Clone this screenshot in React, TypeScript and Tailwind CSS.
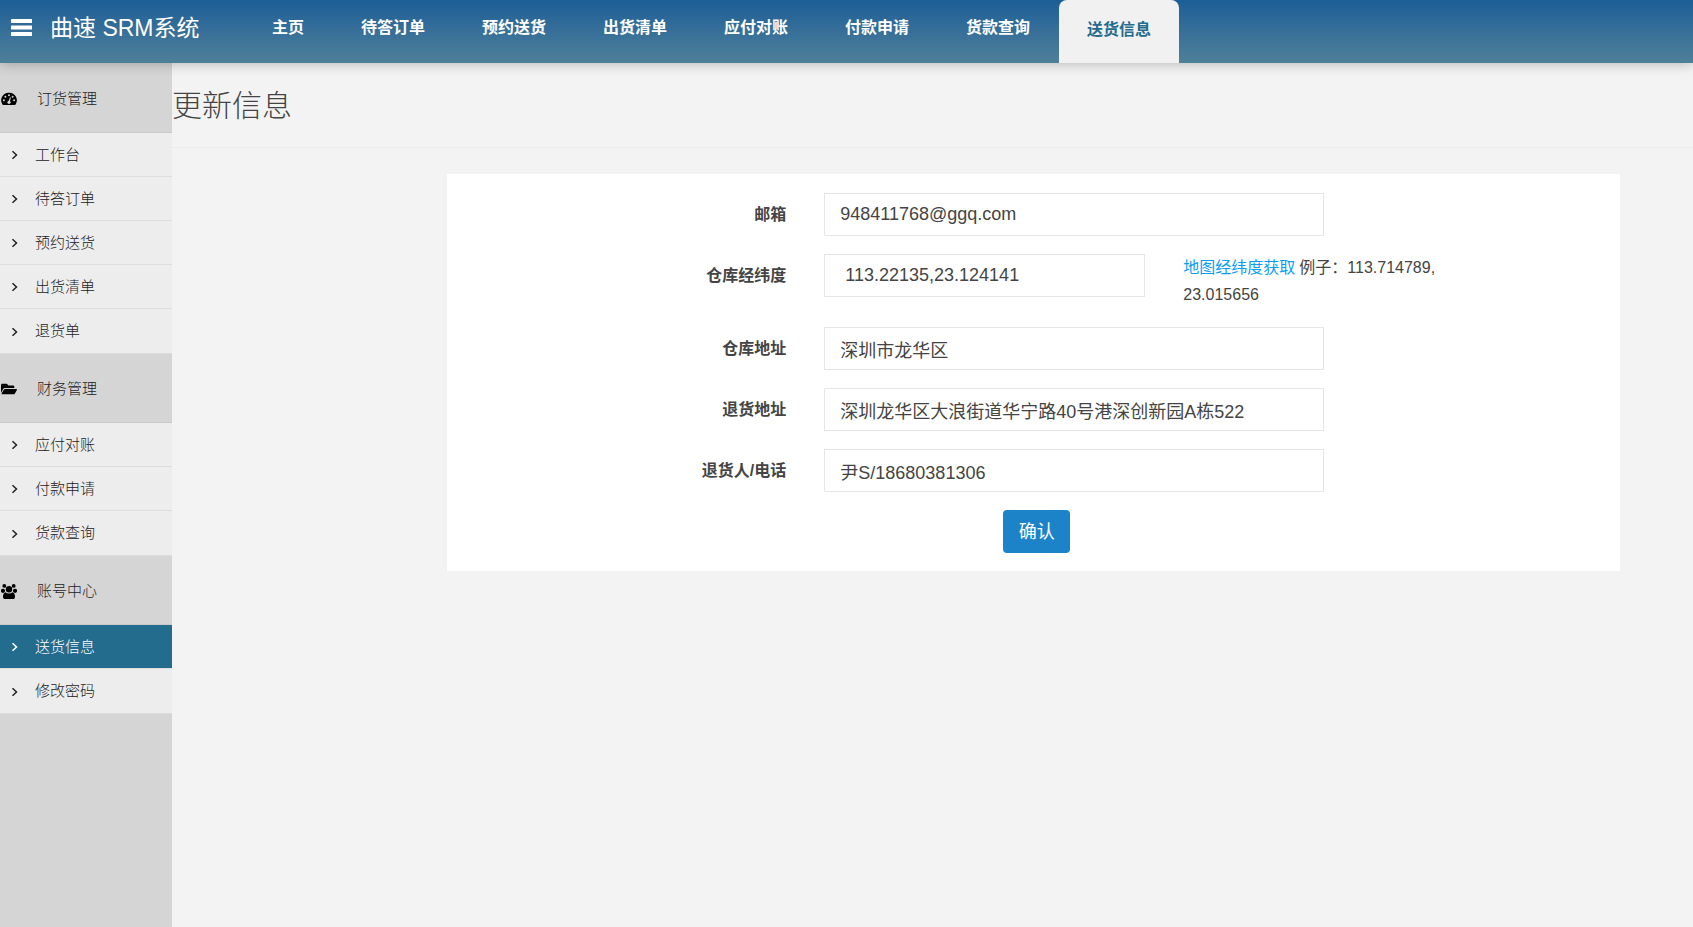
"use client";

// App.tsx
// SRM portal: top tabs, side menu and the delivery info form

import { useState } from "react";
import { FaFolderOpen } from "react-icons/fa";

interface MenuGroup {
  title: string;
  icon: React.ReactNode;
  items: string[];
}

const TABS = ["主页", "待答订单", "预约送货", "出货清单", "应付对账", "付款申请", "货款查询", "送货信息"];

function BarsIcon() {
  return (
    <svg viewBox="0 0 21 17" className="w-[21px] h-[17px]" fill="currentColor">
      <rect width="21" height="4" rx="0.5" />
      <rect y="6.5" width="21" height="4" rx="0.5" />
      <rect y="13" width="21" height="4" rx="0.5" />
    </svg>
  );
}

function DashboardIcon() {
  return (
    <svg viewBox="0 0 16 14" className="w-4 h-[14px]" fill="currentColor">
      <path d="M8 .8a7.500 7.500 0 0 0-6.600 11.600c.2.300.5.500.9.500h11.400c.4 0 .7-.2.9-.5A7.500 7.500 0 0 0 8 .8z" />
      <g fill="#d5d5d5">
        <circle cx="2.900" cy="8.300" r="1" />
        <circle cx="4.400" cy="4.700" r="1" />
        <circle cx="8" cy="3.200" r="1" />
        <circle cx="11.600" cy="4.700" r="1" />
        <circle cx="13.100" cy="8.300" r="1" />
        <circle cx="8" cy="10.300" r="1.600" />
        <path d="M8.900 5.300l1 .3-1.300 4.800-1.200-.3z" />
      </g>
    </svg>
  );
}

function GroupIcon() {
  return (
    <svg viewBox="0 0 16 15" className="w-4 h-[15px]" fill="currentColor">
      <circle cx="3.300" cy="1.900" r="1.900" />
      <circle cx="12.700" cy="1.900" r="1.900" />
      <circle cx="2" cy="6.800" r="2.100" />
      <circle cx="14" cy="6.800" r="2.100" />
      <circle cx="8" cy="5.200" r="3.200" />
      <path d="M4.400 8.200c2 1.600 5.200 1.600 7.200 0 1.800.7 2.400 2.400 2.400 4.500 0 1.500-.8 2.300-2 2.300H4c-1.200 0-2-.8-2-2.300 0-2.100.6-3.800 2.400-4.500z" />
    </svg>
  );
}

function ChevronIcon() {
  return (
    <svg viewBox="0 0 10 10" className="w-[10px] h-[10px]" fill="none" stroke="currentColor" strokeWidth="1.500">
      <path d="M3.500 1.200l4 3.800-4 3.800" />
    </svg>
  );
}

const GROUPS: MenuGroup[] = [
  {
    title: "订货管理",
    icon: <DashboardIcon />,
    items: ["工作台", "待答订单", "预约送货", "出货清单", "退货单"],
  },
  {
    title: "财务管理",
    icon: <FaFolderOpen className="w-4 h-4" />,
    items: ["应付对账", "付款申请", "货款查询"],
  },
  { title: "账号中心", icon: <GroupIcon />, items: ["送货信息", "修改密码"] },
];

const labelClass = "w-[339px] shrink-0 pt-[10px] text-right text-base font-bold leading-6";
const inputClass =
  "h-[43px] border border-[#e6e6e6] bg-white text-lg text-[#444] outline-none";

export default function App() {
  const [current, setCurrent] = useState("送货信息");
  const [form, setForm] = useState({
    email: "948411768@ggq.com",
    location: "113.22135,23.124141",
    warehouse: "深圳市龙华区",
    returnAddress: "深圳龙华区大浪街道华宁路40号港深创新园A栋522",
    contact: "尹S/18680381306",
  });

  function update(e: React.ChangeEvent<HTMLInputElement>) {
    setForm({ ...form, [e.target.name]: e.target.value });
  }

  function textRow(name: "email" | "warehouse" | "returnAddress" | "contact", label: string) {
    return (
      <div className="flex gap-[38px]">
        <label htmlFor={name} className={labelClass}>{label}</label>
        <input
          id={name}
          name={name}
          value={form[name]}
          onChange={update}
          className={`${inputClass} w-[500px] px-[15px]`}
        />
      </div>
    );
  }

  return (
    <div className="min-h-screen flex flex-col bg-[#f3f3f3] text-[#444] font-['Liberation_Sans','Noto_Sans_CJK_SC',sans-serif]">
      {/* ── Header ──────────────────────────────────────────────── */}
      <header className="relative z-10 flex h-[63px] bg-linear-to-b from-[#1b5e97] to-[#4f8099] text-white shadow-[0_1px_12px_rgba(0,0,0,0.25)]">
        <div className="flex w-[244px] shrink-0 items-start pl-[11px]">
          <button type="button" aria-label="菜单" className="mt-[19px]">
            <BarsIcon />
          </button>
          <span className="ml-[18px] mt-3 text-[23px] leading-8">曲速 SRM系统</span>
        </div>
        <nav className="flex gap-px">
          {TABS.map((tab) => (
            <a
              key={tab}
              href="#"
              onClick={() => setCurrent(tab)}
              className={`px-7 text-base font-bold whitespace-nowrap ${
                tab === current
                  ? "rounded-t-lg bg-[#f1f1f1] pt-[18px] text-[#236c8e]"
                  : "pt-4"
              }`}
            >
              {tab}
            </a>
          ))}
        </nav>
      </header>

      <div className="flex flex-1">
        {/* ── Side menu ───────────────────────────────────────────── */}
        <aside className="w-[172px] shrink-0 bg-[#d5d5d5] pt-px text-[15px] font-light text-[#222]">
          {GROUPS.map((group) => (
            <section key={group.title}>
              <h2 className="flex h-[69px] items-center gap-5 border-b border-[#cacaca] pl-px pt-[2px]">
                <span className="text-black">{group.icon}</span>
                {group.title}
              </h2>
              {group.items.map((item) => (
                <a
                  key={item}
                  href="#"
                  onClick={() => setCurrent(item)}
                  className={`flex h-11 items-center gap-4 border-b border-[#dcdcdc] pl-[9px] pt-px last:h-[45px] ${
                    item === current ? "bg-[#236c8e] text-white" : "bg-[#ededed]"
                  }`}
                >
                  <ChevronIcon />
                  {item}
                </a>
              ))}
            </section>
          ))}
        </aside>

        {/* ── Form ────────────────────────────────────────────────── */}
        <main className="min-w-0 flex-1">
          <h1 className="h-[85px] border-b border-[#ebebeb] pt-[21px] text-[30px] font-light leading-[44px]">
            更新信息
          </h1>

          <form
            onSubmit={(e) => e.preventDefault()}
            className="ml-[18.1%] mr-[4.8%] mt-[26px] flex flex-col gap-[18px] bg-white pt-[19px] pb-[18px]"
          >
            {textRow("email", "邮箱")}
            <div className="flex items-start gap-[38px] pb-px">
              <label htmlFor="location" className={labelClass}>仓库经纬度</label>
              <input
                id="location"
                name="location"
                value={form.location}
                onChange={update}
                className={`${inputClass} w-[321px] px-5`}
              />
              <div className="text-base leading-[27px]">
                <div className="flex gap-1">
                  <a href="#" className="text-[#0c9df5]">地图经纬度获取</a>
                  <span>例子：113.714789,</span>
                </div>
                <div>23.015656</div>
              </div>
            </div>
            {textRow("warehouse", "仓库地址")}
            {textRow("returnAddress", "退货地址")}
            {textRow("contact", "退货人/电话")}
            <button
              type="submit"
              className="ml-[556px] h-[43px] w-[67px] rounded bg-[#1d83c8] text-lg text-white"
            >
              确认
            </button>
          </form>
        </main>
      </div>
    </div>
  );
}
